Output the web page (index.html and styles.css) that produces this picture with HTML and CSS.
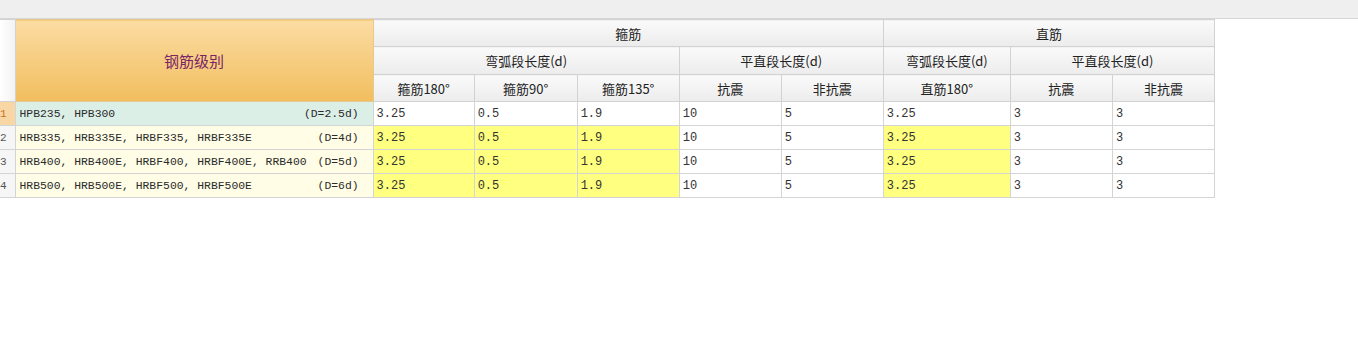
FILE: index.html
```html
<!DOCTYPE html>
<html>
<head>
<meta charset="utf-8">
<link rel="stylesheet" href="styles.css">
</head>
<body>
<div class="topbar"></div>
<table class="grid">
  <colgroup>
    <col class="c-num"><col class="c-name"><col class="c-a"><col class="c-b"><col class="c-c"><col class="c-d"><col class="c-e"><col class="c-f"><col class="c-g"><col class="c-h">
  </colgroup>
  <thead>
    <tr class="h1">
      <th class="corner" rowspan="3"></th>
      <th class="title" rowspan="3">钢筋级别</th>
      <th colspan="5">箍筋</th>
      <th colspan="3">直筋</th>
    </tr>
    <tr class="h2">
      <th colspan="3">弯弧段长度(d)</th>
      <th colspan="2">平直段长度(d)</th>
      <th>弯弧段长度(d)</th>
      <th colspan="2">平直段长度(d)</th>
    </tr>
    <tr class="h3">
      <th>箍筋180°</th>
      <th>箍筋90°</th>
      <th>箍筋135°</th>
      <th>抗震</th>
      <th>非抗震</th>
      <th>直筋180°</th>
      <th>抗震</th>
      <th>非抗震</th>
    </tr>
  </thead>
  <tbody>
    <tr>
      <td class="num sel">1</td>
      <td class="name first"><span class="grade">HPB235, HPB300</span><span class="dia">(D=2.5d)</span></td>
      <td>3.25</td><td>0.5</td><td>1.9</td><td>10</td><td>5</td><td>3.25</td><td>3</td><td>3</td>
    </tr>
    <tr>
      <td class="num">2</td>
      <td class="name"><span class="grade">HRB335, HRB335E, HRBF335, HRBF335E</span><span class="dia">(D=4d)</span></td>
      <td class="hl">3.25</td><td class="hl">0.5</td><td class="hl">1.9</td><td>10</td><td>5</td><td class="hl">3.25</td><td>3</td><td>3</td>
    </tr>
    <tr>
      <td class="num">3</td>
      <td class="name"><span class="grade">HRB400, HRB400E, HRBF400, HRBF400E, RRB400</span><span class="dia">(D=5d)</span></td>
      <td class="hl">3.25</td><td class="hl">0.5</td><td class="hl">1.9</td><td>10</td><td>5</td><td class="hl">3.25</td><td>3</td><td>3</td>
    </tr>
    <tr>
      <td class="num">4</td>
      <td class="name"><span class="grade">HRB500, HRB500E, HRBF500, HRBF500E</span><span class="dia">(D=6d)</span></td>
      <td class="hl">3.25</td><td class="hl">0.5</td><td class="hl">1.9</td><td>10</td><td>5</td><td class="hl">3.25</td><td>3</td><td>3</td>
    </tr>
  </tbody>
</table>
</body>
</html>
```
FILE: styles.css
```css
html, body {
  margin: 0;
  padding: 0;
  background: #ffffff;
}
body {
  font-family: "Noto Sans CJK SC", "Liberation Sans", sans-serif;
}
.topbar {
  height: 18px;
  background: #efefef;
  border-bottom: 1px solid #d6d6d6;
}
.grid {
  border-collapse: collapse;
  table-layout: fixed;
  width: 1215px;
}
.c-num { width: 15px; }
.c-name { width: 358px; }
.c-a { width: 101px; }
.c-b { width: 103px; }
.c-c { width: 102px; }
.c-d { width: 102px; }
.c-e { width: 102px; }
.c-f { width: 127px; }
.c-g { width: 102px; }
.c-h { width: 102px; }

.grid th {
  font-weight: normal;
  font-size: 13px;
  color: #222;
  background: linear-gradient(#fafafa, #ececec);
  border: 1px solid #d2d2d2;
  padding: 0;
  text-align: center;
  white-space: nowrap;
}
.h1 th { height: 26px; }
.h2 th { height: 27px; }
.h3 th { height: 26px; }
.grid th.corner {
  background: linear-gradient(90deg, #ffffff, #f2f2f2);
  border-left: none;
}
.grid th.title {
  background: linear-gradient(#fbdca2, #f1be5e);
  color: #7a2468;
  font-size: 15px;
  border-color: #e7c98f;
}
.grid td {
  height: 23px;
  padding: 0 0 0 3px;
  border: 1px solid #d4d4d4;
  font-family: "Liberation Mono", "DejaVu Sans Mono", monospace;
  font-size: 12px;
  color: #333;
  white-space: nowrap;
  overflow: hidden;
  background: #ffffff;
}
.grid td.hl {
  background: #ffff80;
}
.grid td.num {
  padding: 0;
  font-size: 11px;
  color: #555;
  background: #f6f6f6;
  border-left: none;
}
.grid td.num.sel {
  background: #f8d7a4;
  color: #c8702c;
}
.grid td.name {
  background: #fffde6;
  color: #2b2b2b;
  font-size: 11.4px;
  padding: 0 14px 0 4px;
}
.grid td.name.first {
  background: #dcefe7;
}
.grade {
  float: left;
}
.dia {
  float: right;
}
```
